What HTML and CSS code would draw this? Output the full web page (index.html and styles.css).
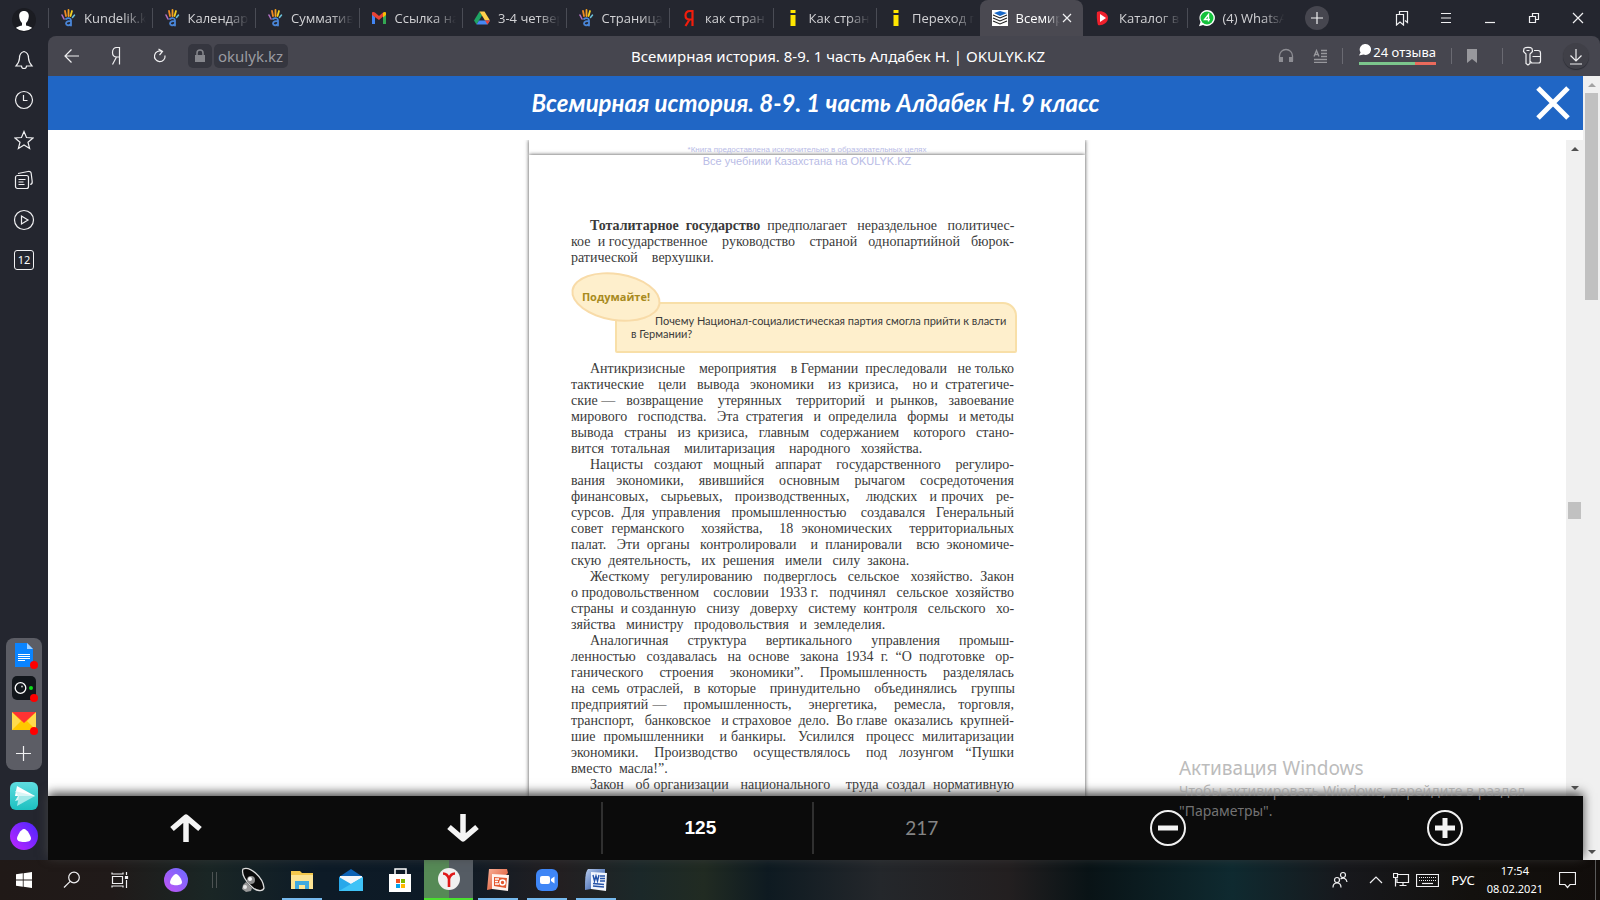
FILE: index.html
```html
<!DOCTYPE html>
<html lang="ru">
<head>
<meta charset="utf-8">
<meta name="viewport" content="width=device-width, initial-scale=1">
<title>Всемирная история. 8-9. 1 часть Алдабек Н. | OKULYK.KZ</title>
<link rel="stylesheet" href="styles.css">
</head>
<body>
<svg class="defs" width="0" height="0" aria-hidden="true">
  <defs>
    <linearGradient id="alice" x1="0" y1="1" x2="1" y2="0"><stop offset="0" stop-color="#c026ff"/><stop offset="1" stop-color="#4a26ff"/></linearGradient>
    <linearGradient id="alice2" x1="0" y1="1" x2="1" y2="0"><stop offset="0" stop-color="#c455f5"/><stop offset="1" stop-color="#6a6bff"/></linearGradient>
    <linearGradient id="teal" x1="0" y1="0" x2="0" y2="1"><stop offset="0" stop-color="#5fdde0"/><stop offset="1" stop-color="#1cc0c0"/></linearGradient>
    <linearGradient id="ppt" x1="0" y1="0" x2="1" y2="1"><stop offset="0" stop-color="#f9b29a"/><stop offset="1" stop-color="#d9431c"/></linearGradient>
    <linearGradient id="word" x1="0" y1="0" x2="1" y2="1"><stop offset="0" stop-color="#b9cdee"/><stop offset="1" stop-color="#1f4ba0"/></linearGradient>
    <symbol id="hand" viewBox="0 0 16 18">
      <g fill="none" stroke-linecap="round">
        <path d="M2 6l2 4" stroke="#b070c0" stroke-width="1.6"/>
        <path d="M5 2l1 5" stroke="#f08a24" stroke-width="1.8"/>
        <path d="M8.500 1v6" stroke="#f4a020" stroke-width="1.8"/>
        <path d="M12 2l-1.500 5" stroke="#f5d020" stroke-width="1.8"/>
        <path d="M14.500 6l-2 2.500" stroke="#6cc0d8" stroke-width="1.5"/>
        <path d="M6 10c2-1.500 5-1 5 1.500v5M11 12.500c-2-1-5 0-5 2s3 2.500 5 .5" stroke="#4a86d8" stroke-width="1.8"/>
      </g>
    </symbol>
    <symbol id="info" viewBox="0 0 16 18"><path d="M5.500 1h5v3h-5zM5.500 6h5v11h-5z" fill="#ffe600"/></symbol>
  </defs>
</svg>

<div class="browser">
  <nav class="side" aria-label="Боковая панель">
    <button class="side-btn" aria-label="Профиль"><svg width="24" height="24" viewBox="0 0 24 24"><circle cx="12" cy="12" r="12" fill="#1b1c22"/><path d="M12 3c3.500 0 5 2.500 4.800 5.500-.2 3.500-1.800 5.500-2.800 6.500v2.500c3 .8 5.500 1.500 6 2.500a12 12 0 0 1-16 0c.5-1 3-1.700 6-2.500V15c-1-1-2.600-3-2.800-6.500C7 5.500 8.500 3 12 3z" fill="#fff"/></svg></button>
    <button class="side-btn" aria-label="Уведомления"><svg class="ln" width="20" height="20" viewBox="0 0 20 20"><path d="M10 1.500c-3.500 1-4.500 3.500-4.500 6.500 0 3.500-1 5-3.500 8h5.500a2.500 2.500 0 0 0 5 0H18c-2.500-3-3.500-4.500-3.500-8 0-3-1-5.500-4.500-6.500z"/></svg></button>
    <button class="side-btn" aria-label="История"><svg class="ln" width="20" height="20" viewBox="0 0 20 20"><circle cx="10" cy="10" r="8.500"/><path d="M9.500 5v5.500h4"/></svg></button>
    <button class="side-btn" aria-label="Избранное"><svg class="ln" width="20" height="20" viewBox="0 0 20 20"><path d="M10 1.500l2.500 6 6.500.5-5 4.200 1.600 6.300L10 15l-5.600 3.500L6 12.200 1 8l6.500-.5z"/></svg></button>
    <button class="side-btn" aria-label="Коллекции"><svg class="ln" width="20" height="20" viewBox="0 0 20 20"><rect x="1.500" y="5.500" width="13" height="13" rx="2"/><path d="M4 3.500l10-2c2-.3 3 .3 3.200 2l1 8c.2 1.500-.5 2.700-2 3M4.500 9.500h7M4.500 12h5M4.500 14.500h6"/></svg></button>
    <button class="side-btn" aria-label="Видео"><svg class="ln" width="22" height="22" viewBox="0 0 22 22"><circle cx="11" cy="11" r="9.500"/><path d="M8.500 7v8l6.500-4z"/></svg></button>
    <button class="side-btn" aria-label="Вкладки"><span class="count">12</span></button>

    <div class="dock">
      <button class="dock-btn dot" aria-label="Документы"><svg width="24" height="24" viewBox="0 0 24 24"><path d="M3 0h12l6 6v18H3z" fill="#0a84ff"/><path d="M15 0l6 6h-6z" fill="#9fcfff"/><path d="M6 11.500h12M6 13.500h12M6 15.500h12M6 17.500h7" stroke="#fff" stroke-width="1"/></svg></button>
      <button class="dock-btn dot" aria-label="Камера"><svg width="24" height="24" viewBox="0 0 24 24"><rect width="24" height="24" rx="5" fill="#12161b"/><circle cx="8.500" cy="12" r="5.300" fill="none" stroke="#fff" stroke-width="1.300"/><circle cx="10" cy="10.500" r="1" fill="#bbb"/><circle cx="19" cy="12" r="2" fill="#0be018"/></svg></button>
      <button class="dock-btn dot" aria-label="Почта"><svg width="24" height="24" viewBox="0 0 24 24"><path d="M0 3h24v18H0z" fill="#ffc800"/><path d="M0 3l9 9-9 9zM24 3l-9 9 9 9z" fill="#ffdb4d"/><path d="M0 3h24L12 14z" fill="#f33"/></svg></button>
      <button class="dock-btn" aria-label="Добавить"><svg class="ln" width="16" height="16" viewBox="0 0 16 16"><path d="M7.500 0v15M0 7.500h15"/></svg></button>
    </div>
    <button class="side-btn" aria-label="Мессенджер"><svg width="28" height="28" viewBox="0 0 28 28"><rect width="28" height="28" rx="6" fill="url(#teal)"/><path d="M7 4l18 10H5z" fill="#fff"/><path d="M5 9l20 5-20 5 3-5z" fill="#d8f6f6"/><path d="M7 24l18-10H9z" fill="#a5e9e9"/></svg></button>
    <button class="side-btn" aria-label="Алиса"><svg width="28" height="28" viewBox="0 0 28 28"><circle cx="14" cy="14" r="14" fill="url(#alice)"/><path d="M14 7c3 0 7 7 7 9.500S18 20 14 20s-7-1-7-3.500S11 7 14 7z" fill="#fff"/></svg></button>
  </nav>

  <div class="window">
    <header class="tabstrip">
      <div class="tabs">
        <div class="tab"><svg class="fav" width="16" height="18"><use href="#hand"/></svg><button class="tab-name">Kundelik.k</button></div>
        <div class="tab"><svg class="fav" width="16" height="18"><use href="#hand"/></svg><button class="tab-name">Календар</button></div>
        <div class="tab"><svg class="fav" width="16" height="18"><use href="#hand"/></svg><button class="tab-name">Сумматив</button></div>
        <div class="tab"><svg class="fav" width="16" height="18" viewBox="0 0 16 18"><path d="M1 4v11h3V8z" fill="#4285f4"/><path d="M15 4v11h-3V8z" fill="#34a853"/><path d="M1 4c0-1 1.500-1.500 3-.5l4 3.500v4L1 6z" fill="#ea4335"/><path d="M8 7l4-3.500v4L8 11z" fill="#ea4335"/><path d="M12 3.500c1.500-1 3-.5 3 .5v2l-3 2.500z" fill="#fbbc04"/></svg><button class="tab-name">Ссылка на</button></div>
        <div class="tab"><svg class="fav" width="16" height="18" viewBox="0 0 16 18"><path d="M5.500 2.500L0 11.500 2.500 15.500 8 6.500z" fill="#1fa463"/><path d="M5.500 2.500h5l5.500 9h-5z" fill="#ffd04b"/><path d="M5 11.500h11L13.500 15.500h-11z" fill="#4688f4"/><path d="M11 11.500h5l-2.500 4z" fill="#ea4335"/></svg><button class="tab-name">3-4 четвер</button></div>
        <div class="tab"><svg class="fav" width="16" height="18"><use href="#hand"/></svg><button class="tab-name">Страница</button></div>
        <div class="tab"><svg class="fav" width="16" height="18" viewBox="0 0 16 18"><path d="M11.500 17V2H9C6 2 4.500 4 4.500 6.500S6 10.500 8.500 10.500h3M8.500 10.500L4.500 17" fill="none" stroke="#f21d0c" stroke-width="2.200"/></svg><button class="tab-name">как стран</button></div>
        <div class="tab"><svg class="fav" width="16" height="18"><use href="#info"/></svg><button class="tab-name">Как стран</button></div>
        <div class="tab"><svg class="fav" width="16" height="18"><use href="#info"/></svg><button class="tab-name">Переход п</button></div>
        <div class="tab active"><svg class="fav" width="16" height="18" viewBox="0 0 16 18"><path d="M0 1h16v16H0z" fill="#fff"/><path d="M2 4l6-2 7 2-7 3z" fill="#1667c7"/><path d="M1 6l7 3 7-3M1 9l7 3 7-3M1 12l7 3 7-3" fill="none" stroke="#222" stroke-width="1.100"/></svg><button class="tab-name">Всемир</button><button class="tab-close" aria-label="Закрыть вкладку"><svg class="ln" width="10" height="10" viewBox="0 0 10 10"><path d="M1 1l8 8M9 1L1 9"/></svg></button></div>
        <div class="tab"><svg class="fav" width="16" height="18" viewBox="0 0 16 18"><path d="M2 3c3-2 11 0 11 6 0 5-6 8-10 7-1-3-1.500-9-1-13z" fill="#f0202c"/><path d="M5 5l6 4-6 4z" fill="#fff"/></svg><button class="tab-name">Каталог в</button></div>
        <div class="tab"><svg class="fav" width="16" height="18" viewBox="0 0 16 18"><path d="M8 1a8 8 0 1 1-4 15l-4 1.200L1.500 13A8 8 0 0 1 8 1z" fill="#fff"/><circle cx="8" cy="9" r="6.500" fill="#14c23c"/><path d="M9.500 12.500v-7l-4 5h5.500" fill="none" stroke="#fff" stroke-width="1.400"/></svg><button class="tab-name">(4) WhatsA</button></div>
      </div>
      <button class="new-tab" aria-label="Новая вкладка"><svg class="ln" width="12" height="12" viewBox="0 0 12 12"><path d="M6 0v12M0 6h12"/></svg></button>
      <div class="win-btns">
        <button aria-label="Закладки"><svg class="ln" width="14" height="16" viewBox="0 0 14 16"><path d="M1.500 4.500h7v10.500l-3.500-3-3.500 3z"/><path d="M4.500 4V1.500h8V12.500l-2.500-2"/></svg></button>
        <button aria-label="Меню"><svg class="ln" width="12" height="12" viewBox="0 0 12 12"><path d="M1 1.500h10M1 6h10M1 10.500h10"/></svg></button>
        <button aria-label="Свернуть"><svg class="ln" width="10" height="12" viewBox="0 0 10 12"><path d="M0 10.500h10"/></svg></button>
        <button aria-label="Восстановить"><svg class="ln" width="12" height="12" viewBox="0 0 12 12"><path d="M1.500 4.500h6v6h-6zM4.500 4V1.500h6v6H8"/></svg></button>
        <button aria-label="Закрыть"><svg class="ln" width="12" height="12" viewBox="0 0 12 12"><path d="M1 1l10 10M11 1L1 11"/></svg></button>
      </div>
    </header>

    <div class="toolbar">
      <div class="nav">
        <button aria-label="Назад"><svg class="ln" width="16" height="16" viewBox="0 0 16 16"><path d="M15 8H1M7.500 1.500L1 8l6.500 6.500"/></svg></button>
        <button aria-label="Яндекс"><svg class="ln" width="10" height="18" viewBox="0 0 10 18"><path d="M8.500 17.500V.5H6C3 .5 1.500 2.500 1.500 5.500S3 10 6 10h2.500M5.500 10L1.500 17.500"/></svg></button>
        <button aria-label="Обновить"><svg class="ln" width="14" height="16" viewBox="0 0 14 16"><path d="M12 7.500a5.300 5.300 0 1 1-3-4M5.500 1l4 2.500-3 3.500"/></svg></button>
        <span class="lock"><svg width="12" height="14" viewBox="0 0 12 14"><path d="M1 6h10v7H1z" fill="#85868c"/><path d="M3 6V4a3 3 0 0 1 6 0v2" fill="none" stroke="#85868c" stroke-width="1.500"/></svg></span>
        <a class="host" href="#">okulyk.kz</a>
      </div>
      <div class="doc-title">Всемирная история. 8-9. 1 часть Алдабек Н. | OKULYK.KZ</div>
      <div class="tools">
        <button aria-label="Слушать"><svg width="16" height="16" viewBox="0 0 16 16"><path d="M1.500 13V8a6.500 6.500 0 0 1 13 0v5" fill="none" stroke="#8d8d93" stroke-width="1.300"/><path d="M1 9h4v5H1zM11 9h4v5h-4z" fill="#8d8d93"/></svg></button>
        <button aria-label="Режим чтения"><svg width="14" height="14" viewBox="0 0 14 14"><path d="M8 1.500h6M8 4.500h6M8 7.500h6M1 10.500h13M1 13.300h13M1 7.500l2.500-6L6 7.500M2 5.500h3" fill="none" stroke="#98989d" stroke-width="1.300"/></svg></button>
        <i class="sep"></i>
        <a class="reviews" href="#"><span><svg width="12" height="12" viewBox="0 0 12 12"><path d="M6.500 0a5.500 5.500 0 1 1-2 10.600L0 11.500l1.600-3A5.500 5.500 0 0 1 6.500 0z" fill="#fff"/></svg>24 отзыва</span></a>
        <i class="sep"></i>
        <button aria-label="В закладки"><svg width="10" height="14" viewBox="0 0 10 14"><path d="M0 0h10v14L5 10l-5 4z" fill="#98989d"/></svg></button>
        <i class="sep"></i>
        <button aria-label="Пароли"><svg class="ln" width="20" height="20" viewBox="0 0 20 20"><path d="M2 2.500C3 1 9 1 10 2.500l.5 3L8 8v9.500L6 19l-2-1.500V8L1.500 5.500zM4.500 4.500h3"/><path d="M12 4.500h4c1.700 0 2.500.8 2.500 2.500v8c0 1.300-.7 2-2 2h-6c-1.300 0-2-.7-2-2M10.500 10.500h8"/></svg></button>
        <button class="dl" aria-label="Загрузки"><svg class="ln" width="14" height="18" viewBox="0 0 14 18"><path d="M7 2v12M1.500 8.500L7 14l5.500-5.500M1 17h12"/></svg></button>
      </div>
    </div>

    <div class="site">
      <main class="reader">
        <div class="book-head">
          <h1>Всемирная история. 8-9. 1 часть Алдабек Н. 9 класс</h1>
          <button class="close" aria-label="Закрыть книгу"><svg width="34" height="34" viewBox="0 0 34 34"><path d="M2 2l30 30M32 2L2 32" stroke="#fff" stroke-width="5" fill="none"/></svg></button>
        </div>
        <div class="view">
          <div class="canvas">
            <div class="prev-page"></div>
            <article class="page">
              <p class="origin"><small>*Книга предоставлена исключительно в образовательных целях</small>Все учебники Казахстана на OKULYK.KZ</p>
              <p class="para"><span><b>Тоталитарное  государство</b>  предполагает   нераздельное   политичес-</span><span>кое  и государственное    руководство    страной   однопартийной   бюрок-</span><span>ратической    верхушки.</span></p>
              <aside class="think">
                <strong>Подумайте!</strong>
                <p>Почему Национал-социалистическая партия смогла прийти к власти в Германии?</p>
              </aside>
              <p class="para"><span>Антикризисные    мероприятия    в Германии  преследовали   не только</span><span>тактические    цели   вывода   экономики    из  кризиса,    но и  стратегиче-</span><span>ские —   возвращение    утерянных    территорий   и  рынков,   завоевание</span><span>мирового   господства.   Эта  стратегия   и  определила   формы   и методы</span><span>вывода   страны   из  кризиса,   главным   содержанием    которого   стано-</span><span>вится  тотальная    милитаризация    народного   хозяйства.</span></p>
              <p class="para"><span>Нацисты   создают   мощный   аппарат    государственного    регулиро-</span><span>вания   экономики,    явившийся    основным    рычагом    сосредоточения</span><span>финансовых,   сырьевых,   производственных,    людских   и прочих   ре-</span><span>сурсов.  Для  управления   промышленностью    создавался   Генеральный</span><span>совет  германского    хозяйства,    18  экономических    территориальных</span><span>палат.   Эти  органы   контролировали    и  планировали    всю  экономиче-</span><span>скую  деятельность,   их  решения   имели   силу  закона.</span></p>
              <p class="para"><span>Жесткому   регулированию   подверглось   сельское   хозяйство.  Закон</span><span>о продовольственном    сословии   1933 г.   подчинял   сельское  хозяйство</span><span>страны  и созданную   снизу   доверху   систему  контроля   сельского   хо-</span><span>зяйства   министру   продовольствия   и  земледелия.</span></p>
              <p class="para"><span>Аналогичная    структура    вертикального    управления    промыш-</span><span>ленностью   создавалась   на  основе   закона  1934  г.  “О  подготовке   ор-</span><span>ганического    строения    экономики”.    Промышленность    разделялась</span><span>на  семь  отраслей,   в  которые    принудительно    объединялись    группы</span><span>предприятий —    промышленность,    энергетика,    ремесла,   торговля,</span><span>транспорт,   банковское   и страховое  дело.  Во главе  оказались  крупней-</span><span>шие  промышленники    и банкиры.   Усилился   процесс  милитаризации</span><span>экономики.    Производство    осуществлялось    под   лозунгом   “Пушки</span><span>вместо  масла!”.</span></p>
              <p class="para"><span>Закон   об организации   национального    труда  создал  нормативную</span></p>
            </article>
          </div>
          <div class="scroll inner"><i class="up"></i><i class="before"></i><i class="thumb"></i><i class="after"></i><i class="down"></i></div>
          <div class="notice"><b>Активация Windows</b><span>Чтобы активировать Windows, перейдите в раздел<br>"Параметры".</span></div>
        </div>
        <footer class="pager">
          <button aria-label="Предыдущая"><svg width="32" height="28" viewBox="0 0 32 28"><path d="M16 28V4M2 15L16 3l14 12" fill="none" stroke="#f4f4f4" stroke-width="5.500" stroke-linejoin="round"/></svg></button>
          <button aria-label="Следующая"><svg width="32" height="28" viewBox="0 0 32 28"><path d="M16 0v24M2 13l14 12 14-12" fill="none" stroke="#f4f4f4" stroke-width="5.500" stroke-linejoin="round"/></svg></button>
          <label class="cell"><input type="text" value="125" aria-label="Номер страницы"></label>
          <div class="cell total">217</div>
          <button aria-label="Уменьшить"><svg width="38" height="38" viewBox="0 0 38 38"><circle cx="19" cy="19" r="17" fill="#0b0b0b" stroke="#f0f0f0" stroke-width="2"/><path d="M9 19h20" stroke="#f4f4f4" stroke-width="5"/></svg></button>
          <button aria-label="Увеличить"><svg width="38" height="38" viewBox="0 0 38 38"><circle cx="19" cy="19" r="17" fill="#0b0b0b" stroke="#f0f0f0" stroke-width="2"/><path d="M9 19h20M19 9v20" stroke="#f4f4f4" stroke-width="5"/></svg></button>
        </footer>
      </main>
      <div class="scroll outer"><i class="up"></i><i class="thumb"></i><i class="after"></i><i class="down"></i></div>
    </div>
  </div>
</div>

<footer class="taskbar">
  <div class="apps">
    <button class="sys" aria-label="Пуск"><svg width="16" height="16" viewBox="0 0 16 16"><path d="M0 2.300l6.800-1v6.300H0zM7.600 1.200L16 0v7.600H7.600zM0 8.400h6.800v6.300L0 13.700zM7.600 8.400H16V16l-8.400-1.200z" fill="#fff"/></svg></button>
    <button class="sys" aria-label="Поиск"><svg class="ln" width="18" height="18" viewBox="0 0 18 18"><circle cx="11" cy="6.500" r="5.300"/><path d="M7.200 10.300L1 16.500"/></svg></button>
    <button class="sys" aria-label="Представление задач"><svg class="ln" width="18" height="16" viewBox="0 0 18 16"><path d="M1.500 4.500h10v7h-10zM1 .5v1.500h11V.5M1 15.500V14h11v1.500M15.500 0v3M15.500 8v8"/><path d="M14.500 4.500h2v2h-2z" fill="#fff"/></svg></button>
    <button class="alice" aria-label="Алиса"><svg width="24" height="24" viewBox="0 0 28 28"><circle cx="14" cy="14" r="14" fill="url(#alice2)"/><path d="M14 7c3 0 7 7 7 9.500S18 20 14 20s-7-1-7-3.500S11 7 14 7z" fill="#fff"/></svg></button>
    <span class="grip"></span>
    <button class="app" aria-label="Звук"><svg width="26" height="26" viewBox="0 0 26 26"><path d="M3 2c7-3 20 8 21 19-1 4-8 3-12-1C6 15 1 7 3 2z" fill="#0a0a0a" stroke="#ddd" stroke-width="1.300"/><circle cx="11" cy="13" r="4" fill="#8c8c8c"/><circle cx="10" cy="12" r="2" fill="#fff"/><path d="M6 15l-3 3-1 4 4 3 5-1 1-3z" fill="#999"/><circle cx="5" cy="20" r="2" fill="#e8e8e8"/></svg></button>
    <button class="app open" aria-label="Проводник"><svg width="22" height="20" viewBox="0 0 22 20"><path d="M0 1h9l2 2h11v16H0z" fill="#f4c84c"/><path d="M0 5h22v14H0z" fill="#fde494"/><path d="M4 19v-8h14v8h-4v-4H8v4z" fill="#3fa9e0"/></svg></button>
    <button class="app" aria-label="Почта"><svg width="24" height="24" viewBox="0 0 24 24"><path d="M12 1l12 8v6H0V9z" fill="#0c62b5"/><path d="M1 8h22v8H1z" fill="#f3f6fa"/><path d="M0 9l12 7 12-7v14H0z" fill="#28a8ea"/><path d="M0 23L24 9v14z" fill="#3fc3f7"/></svg></button>
    <button class="app" aria-label="Магазин"><svg width="24" height="24" viewBox="0 0 24 24"><path d="M7 7V1h11v6" fill="none" stroke="#fff" stroke-width="1.500"/><path d="M1 6h22v18H1z" fill="#fff"/><path d="M8 11h4v4H8z" fill="#f25022"/><path d="M13 11h4v4h-4z" fill="#7fba00"/><path d="M8 16h4v4H8z" fill="#00a4ef"/><path d="M13 16h4v4h-4z" fill="#ffb900"/></svg></button>
    <button class="app current" aria-label="Яндекс Браузер"><svg width="22" height="22" viewBox="0 0 22 22"><circle cx="11" cy="11" r="11" fill="#f0f0f0"/><path d="M5 5.500c3 0 5 2 6 5.500 1-3.500 3-5.500 6-5.500M11 10v9" fill="none" stroke="#e01818" stroke-width="2.600"/></svg></button>
    <button class="app open" aria-label="PowerPoint"><svg width="24" height="24" viewBox="0 0 24 24"><path d="M3 1h18l1 4-16 16-5 1z" fill="url(#ppt)"/><path d="M6 6l17 1-1 16-16-2z" fill="#fff3ee"/><path d="M8 9l13 1-1 10-12-2z" fill="#e4572e"/><path d="M9 11h4M9 13.500h3M9 16h4" stroke="#fff" stroke-width="1.300"/><circle cx="16.500" cy="14.500" r="2.500" fill="none" stroke="#fff" stroke-width="1.600"/></svg></button>
    <button class="app open" aria-label="Zoom"><svg width="22" height="22" viewBox="0 0 22 22"><rect width="22" height="22" rx="6" fill="#3f86f6"/><rect x="4" y="7" width="10" height="8" rx="2" fill="#fff"/><path d="M15 10l3.500-2.500v7L15 12z" fill="#fff"/></svg></button>
    <button class="app open" aria-label="Word"><svg width="24" height="24" viewBox="0 0 24 24"><path d="M4 1h17v4L7 21l-6 1c0-9 0-18 3-21z" fill="url(#word)"/><path d="M7 4l16 1-1 18-15-2z" fill="#f2f6fd"/><path d="M9 7l1.500 6L12 8l1.500 5L15 7M16 8h5M16 10.500h5M16 13h5M9 15.500l11 1M9 18l11 1" fill="none" stroke="#2553a8" stroke-width="1.400"/></svg></button>
  </div>
  <div class="tray">
    <button aria-label="Люди"><svg class="ln" width="16" height="18" viewBox="0 0 16 18"><circle cx="5" cy="9" r="2.500"/><circle cx="11" cy="4" r="2.500"/><path d="M1 16.500c0-6 8-6 8 0M8.500 8c3-2 6-.5 6.500 3"/></svg></button>
    <button class="chev" aria-label="Скрытые значки"><svg class="ln" width="14" height="8" viewBox="0 0 14 8"><path d="M1 7l6-6 6 6"/></svg></button>
    <button aria-label="Сеть"><svg class="ln" width="17" height="14" viewBox="0 0 17 14"><path d="M4.500 1.500h11v8H4v-4M10 9.500v3M6.500 12.500h7M.5.500h4v4h-4zM2.500 4.500v9"/></svg></button>
    <button aria-label="Клавиатура"><svg class="ln" width="23" height="13" viewBox="0 0 23 13"><path d="M.5.500h22v12H.5z"/><path d="M3 3.500h17M3 6.500h17" stroke-dasharray="1 1"/><path d="M6 9.500h11"/></svg></button>
    <button class="lang">РУС</button>
    <div class="clock"><time>17:54</time><span>08.02.2021</span></div>
    <button class="note" aria-label="Центр уведомлений"><svg class="ln" width="17" height="17" viewBox="0 0 17 17"><path d="M.5.500h16v12H11l-2.500 3-2.500-3H.5z"/></svg></button>
  </div>
</footer>
</body>
</html>
```

FILE: styles.css
```css
* { box-sizing: border-box; }

body {
  margin: 0;
  height: 100vh;
  display: flex;
  flex-direction: column;
  overflow: hidden;
  background: #24262f;
  font-family: "Noto Sans", "Open Sans", sans-serif;
  font-size: 13px;
  color: #fff;
}

button {
  display: flex;
  align-items: center;
  justify-content: center;
  padding: 0;
  border: 0;
  background: none;
  color: inherit;
  font: inherit;
}

a { color: inherit; text-decoration: none; }
.defs { position: absolute; }
.ln { fill: none; stroke: #f0f0f2; stroke-width: 1.2; }

.browser { flex: 1; min-height: 0; display: flex; }

/* Sidebar */
.side {
  width: 48px;
  flex: none;
  display: flex;
  flex-direction: column;
  align-items: center;
  padding-bottom: 4px;
}
.side-btn { width: 48px; height: 40px; flex: none; }
.count {
  width: 20px;
  height: 20px;
  border: 1px solid #f0f0f2;
  border-radius: 3px;
  font-size: 11px;
  line-height: 18px;
}
.dock {
  width: 36px;
  margin-top: auto;
  margin-bottom: 6px;
  border-radius: 8px;
  background: #5c5d65;
}
.dock-btn { position: relative; width: 36px; height: 33px; }
.dot::after {
  content: "";
  position: absolute;
  right: 4px;
  bottom: 2px;
  width: 8px;
  height: 8px;
  border-radius: 50%;
  background: #f00;
}

/* Tabs */
.window { flex: 1; min-width: 0; display: flex; flex-direction: column; }
.tabstrip { height: 36px; flex: none; display: flex; align-items: center; }
.tabs {
  flex: 0 1 1242px;
  min-width: 0;
  height: 36px;
  display: grid;
  grid-template-columns: repeat(12, minmax(0, 1fr));
  align-items: center;
}
.tab {
  height: 20px;
  display: flex;
  align-items: center;
  padding: 0 2px 0 11px;
  border-left: 1px solid #4a4c55;
  color: #d2d2d5;
}
.fav { flex: none; margin-right: 8px; }
.tab-name {
  flex: 1;
  min-width: 0;
  justify-content: flex-start;
  overflow: hidden;
  white-space: nowrap;
  font-family: "Open Sans", sans-serif;
  -webkit-mask-image: linear-gradient(90deg, #000 60%, transparent 94%);
  mask-image: linear-gradient(90deg, #000 60%, transparent 94%);
}
.tab.active {
  height: 36px;
  padding-right: 9px;
  border-color: transparent;
  border-radius: 8px 8px 0 0;
  background: #4a4951;
  color: #fff;
}
.active .tab-name {
  -webkit-mask-image: linear-gradient(90deg, #000 70%, transparent);
  mask-image: linear-gradient(90deg, #000 70%, transparent);
}
.tab.active + .tab { border-color: transparent; }
.tab-close { width: 14px; height: 16px; }
.new-tab {
  width: 24px;
  height: 24px;
  margin-left: 15px;
  border-radius: 50%;
  background: #46464f;
}
.win-btns { margin-left: auto; display: flex; }
.win-btns button { width: 44px; height: 36px; }

/* Address bar */
.toolbar {
  height: 40px;
  flex: none;
  display: grid;
  grid-template-columns: 1fr auto 1fr;
  align-items: center;
  border-radius: 8px 8px 0 0;
  background: #46464f;
}
.nav, .tools { display: flex; align-items: center; }
.nav button { width: 44px; height: 40px; }
.nav button:first-child { margin-left: 2px; }
.lock, .host {
  height: 24px;
  display: flex;
  align-items: center;
  justify-content: center;
  border-radius: 5px;
  background: #35363f;
}
.lock { width: 24px; margin-left: 6px; margin-right: 2px; }
.host { padding: 0 5px 0 4px; font-size: 15px; color: #9a9ba1; }
.doc-title { padding-left: 28px; font-size: 15px; white-space: nowrap; }
.tools { justify-content: flex-end; padding-right: 8px; }
.tools button { width: 34px; height: 40px; }
.sep { width: 1px; height: 16px; background: #6a6a72; margin: 0 5px; }
.tools .sep:nth-of-type(2) { margin-right: 3px; }
.tools .sep:nth-of-type(3) { margin: 0 12px 0 13px; }
.reviews {
  margin: 0 10px 4px 11px;
  padding-bottom: 1px;
  border-bottom: 3px solid;
  border-image: linear-gradient(90deg, #7cc68d 72%, #ea6a5c 72%) 1;
  line-height: 17px;
}
.reviews span { display: flex; gap: 2px; white-space: nowrap; }
.tools .dl {
  width: 26px;
  height: 26px;
  margin-left: 14px;
  margin-right: 3px;
  border-radius: 50%;
  background: #404048;
  box-shadow: 0 1px 1px #2c2d35;
}

/* Book reader */
.site { flex: 1; min-height: 0; display: flex; background: #fff; }
.reader { flex: 1; min-width: 0; display: flex; flex-direction: column; }
.book-head {
  height: 54px;
  flex: none;
  display: grid;
  grid-template-columns: 60px 1fr 60px;
  align-items: center;
  background: #2066c5;
}
.book-head h1 {
  grid-column: 2;
  margin: 0;
  text-align: center;
  font: italic 700 24px/32px Lato, "Open Sans", sans-serif;
}
.close { height: 54px; }
.view { position: relative; flex: 1; min-height: 0; display: flex; margin-top: 10px; }
.canvas { flex: 1; min-width: 0; overflow: hidden; display: flex; flex-direction: column; align-items: center; }
.prev-page { width: 556px; height: 15px; flex: none; box-shadow: 0 0 4px #444; }
.page {
  width: 556px;
  flex: none;
  padding: 0 71px 40px 42px;
  background: #fff;
  box-shadow: 0 0 4px #444;
  color: #3a3a3a;
  font: 14px/16px "Liberation Serif", serif;
}
.origin {
  margin: -10px -29px 50px 0;
  text-align: center;
  color: #b9bce6;
  font: 11px/14px "Liberation Sans", sans-serif;
}
.origin small { display: block; font-size: 8px; line-height: 9px; }
.para { margin: 0; }
.para span { display: block; white-space: pre; text-align-last: justify; }
.para span:first-child { padding-left: 19px; }
.para span:last-child:not(:only-child) { text-align-last: left; }
.think {
  position: relative;
  margin: 36px -3px 8px 44px;
  padding: 10px 2px 11px 14px;
  border: 2px solid #f8dfa8;
  border-radius: 2px 14px 2px 2px;
  background: #feefcc;
  font: 11px/13px Lato, "Open Sans", sans-serif;
}
.think p { margin: 0; text-indent: 24px; }
.think strong {
  position: absolute;
  z-index: 1;
  left: -46px;
  top: -31px;
  width: 90px;
  text-align: center;
  line-height: 48px;
  font-family: "Open Sans", sans-serif;
  color: #a88a20;
}
.think strong::before {
  content: "";
  position: absolute;
  inset: 0;
  z-index: -1;
  border: 2px solid #f8dba8;
  border-radius: 50%;
  background: #feefcc;
  transform: rotate(9deg);
}

.notice {
  position: absolute;
  z-index: 3;
  right: 49px;
  bottom: -25px;
  width: 355px;
  color: #9b9b9bbb;
  font-size: 14px;
  line-height: 20px;
}
.notice b { display: block; color: #bcbcbc; font-size: 19px; font-weight: 400; line-height: 26px; }
.notice span { white-space: nowrap; }

.pager {
  position: relative;
  z-index: 2;
  height: 64px;
  flex: none;
  display: grid;
  grid-template-columns: 180fr 180fr 137fr 142fr 180fr 180fr;
  align-items: center;
  background: #0b0b0b;
  box-shadow: 0 -3px 10px #444;
}
.cell {
  height: 52px;
  display: flex;
  align-items: center;
  border-left: 2px solid #303030;
}
.cell input {
  width: 100%;
  padding: 0 14px 0 0;
  border: 0;
  background: none;
  text-align: center;
  color: #fff;
  font: 700 19px/24px "Liberation Sans", sans-serif;
}
.total { justify-content: center; color: #858585; font: 19px/24px Lato, sans-serif; }

/* Scrollbars */
.scroll { width: 17px; flex: none; display: flex; flex-direction: column; align-items: center; background: #f0f0f0; }
.scroll .thumb { width: 13px; background: #c1c1c1; }
.inner .before { flex: 346; }
.inner .thumb { height: 17px; }
.inner .after { flex: 260; }
.outer .thumb { flex: 207; }
.outer .after { flex: 543; }
.up, .down { width: 17px; height: 17px; display: flex; align-items: center; justify-content: center; }
.up::before, .down::before { content: ""; border: 4px solid transparent; }
.up::before { border-top: 0; border-bottom-color: #505050; }
.down::before { border-bottom: 0; border-top-color: #505050; }
.outer .up::before { border-bottom-color: #a3a3a3; }

/* Taskbar */
.taskbar {
  height: 40px;
  flex: none;
  display: flex;
  justify-content: space-between;
  background: linear-gradient(90deg, #201917 0, #201a19 7%, #1a2625 13%, #0d1b27 20%, #0d1a26 28%, #231f21 35%, #1b2829 40%, #212b22 44%, #0e1a21 48%, #24272b 55%, #231f20 63%, #091316 68%, #0f2a30 77%, #17181c 84%, #13110e 92%, #110d0b 100%);
}
.apps, .tray { display: flex; align-items: center; }
.apps button { height: 40px; }
.sys { width: 48px; }
.alice { width: 64px; }
.grip { width: 5px; height: 16px; margin: 0 11px 0 4px; border: solid #4d5353; border-width: 0 1px; }
.app { width: 49px; }
.open { background: linear-gradient(#76b9ed, #76b9ed) center bottom / 40px 2px no-repeat; }
.current { border-bottom: 2px solid #4be02f; background: linear-gradient(90deg, #568a56 50%, #555c64 50%); }
.tray button { height: 40px; margin-right: 6px; }
.tray .chev { margin-left: 15px; margin-right: 10px; }
.tray .lang { margin-left: 6px; margin-right: 12px; }
.clock { display: flex; flex-direction: column; align-items: center; font-size: 11px; line-height: 18px; }
.tray .note { margin: 0 4px 0 0; padding: 0 19px 0 16px; border-right: 1px solid #5a5a5a; }
```
